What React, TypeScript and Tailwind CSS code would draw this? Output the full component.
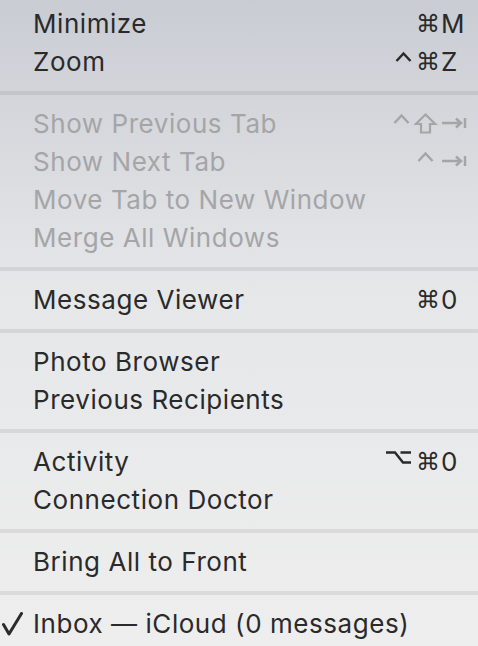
import React from 'react';

type Mod = 'ctrl' | 'shift' | 'opt' | 'cmd';

type Item = {
    label: string;
    mods?: Mod[];
    keyName?: string;
    disabled?: boolean;
    checked?: boolean;
};

const groups: Item[][] = [
    [
        { label: 'Minimize', mods: ['cmd'], keyName: 'M' },
        { label: 'Zoom', mods: ['ctrl', 'cmd'], keyName: 'Z' },
    ],
    [
        { label: 'Show Previous Tab', mods: ['ctrl', 'shift'], keyName: 'tab', disabled: true },
        { label: 'Show Next Tab', mods: ['ctrl'], keyName: 'tab', disabled: true },
        { label: 'Move Tab to New Window', disabled: true },
        { label: 'Merge All Windows', disabled: true },
    ],
    [{ label: 'Message Viewer', mods: ['cmd'], keyName: '0' }],
    [{ label: 'Photo Browser' }, { label: 'Previous Recipients' }],
    [
        { label: 'Activity', mods: ['opt', 'cmd'], keyName: '0' },
        { label: 'Connection Doctor' },
    ],
    [{ label: 'Bring All to Front' }],
    [{ label: 'Inbox — iCloud (0 messages)', checked: true }],
];

// all glyph svgs are 24 tall, centred on the row; cap top ~y2, baseline ~y21
const Caret = () => (
    <svg width="21" height="24" viewBox="0 0 21 24" fill="none" stroke="currentColor" strokeWidth={2.5} strokeLinejoin="miter">
        <path d="M1.5 11 L8.5 3.5 L15.5 11" />
    </svg>
);

const Shift = () => (
    <svg width="24" height="24" viewBox="0 0 24 24" fill="none" stroke="currentColor" strokeWidth={2.2} strokeLinejoin="miter">
        <path d="M11.5 2.5 L1.8 12 L7 12 L7 20.5 L16 20.5 L16 12 L21.2 12 Z" />
    </svg>
);

const Option = () => (
    <svg width="30" height="24" viewBox="0 0 30 24" fill="none" stroke="currentColor" strokeWidth={2.5}>
        <path d="M0 2.5 L9 2.5 L17 12.5 L25 12.5 M14.5 2.5 L25 2.5" />
    </svg>
);

const Tab = () => (
    <svg width="26" height="24" viewBox="0 0 26 24" fill="none" stroke="currentColor" strokeWidth={2.5}>
        <path d="M1 11 L20 11 M15 6.5 L20 11 L15 15.5" />
        <path d="M24 6 L24 16" />
    </svg>
);

const Cmd = () => (
    <span className="inline-block w-[22px] text-center text-[24px] leading-none font-['DejaVu_Sans',sans-serif]">⌘</span>
);

const modIcon = (m: Mod, i: number) => {
    if (m === 'ctrl') return <Caret key={i} />;
    if (m === 'shift') return <Shift key={i} />;
    if (m === 'opt') return <Option key={i} />;
    return <Cmd key={i} />;
};

const Check = () => (
    <svg width="24" height="24" viewBox="0 0 24 24" fill="none" stroke="#2b2b2b" strokeWidth={3} strokeLinecap="round" strokeLinejoin="round">
        <path d="M3.5 12.5 L9 22 L21.5 1.5" />
    </svg>
);

const MenuRow = ({ item }: { item: Item }) => {
    const color = item.disabled ? 'text-[#a5a5a7]' : 'text-[#2a2a2a]';
    return (
        <div className={`flex items-center h-[38px] pr-[11px] ${color}`}>
            <div className="w-[33px] flex">{item.checked && <Check />}</div>
            <div className="flex-1 text-[26px] leading-none tracking-[0.55px] font-['Inter',sans-serif] whitespace-nowrap">{item.label}</div>
            {item.keyName && (
                <div className="flex items-center">
                    <div className="flex items-center">{item.mods?.map(modIcon)}</div>
                    <div className="w-[26px] ml-[3px] flex items-center text-[26px] leading-none font-['Inter',sans-serif]">
                        {item.keyName === 'tab' ? <Tab /> : item.keyName}
                    </div>
                </div>
            )}
        </div>
    );
};

export default function App() {
    return (
        <div className="w-[478px] h-[646px] overflow-hidden bg-gradient-to-b from-[#c9ccd3] via-[#e6e7e9] via-45% to-[#eeeeee] pt-[5px]">
            {groups.map((g, gi) => (
                <div key={gi}>
                    {gi > 0 && (
                        <div className="py-[10px]">
                            <div className="h-[4px] bg-black/[0.075]" />
                        </div>
                    )}
                    {g.map(item => (
                        <MenuRow key={item.label} item={item} />
                    ))}
                </div>
            ))}
        </div>
    );
}
